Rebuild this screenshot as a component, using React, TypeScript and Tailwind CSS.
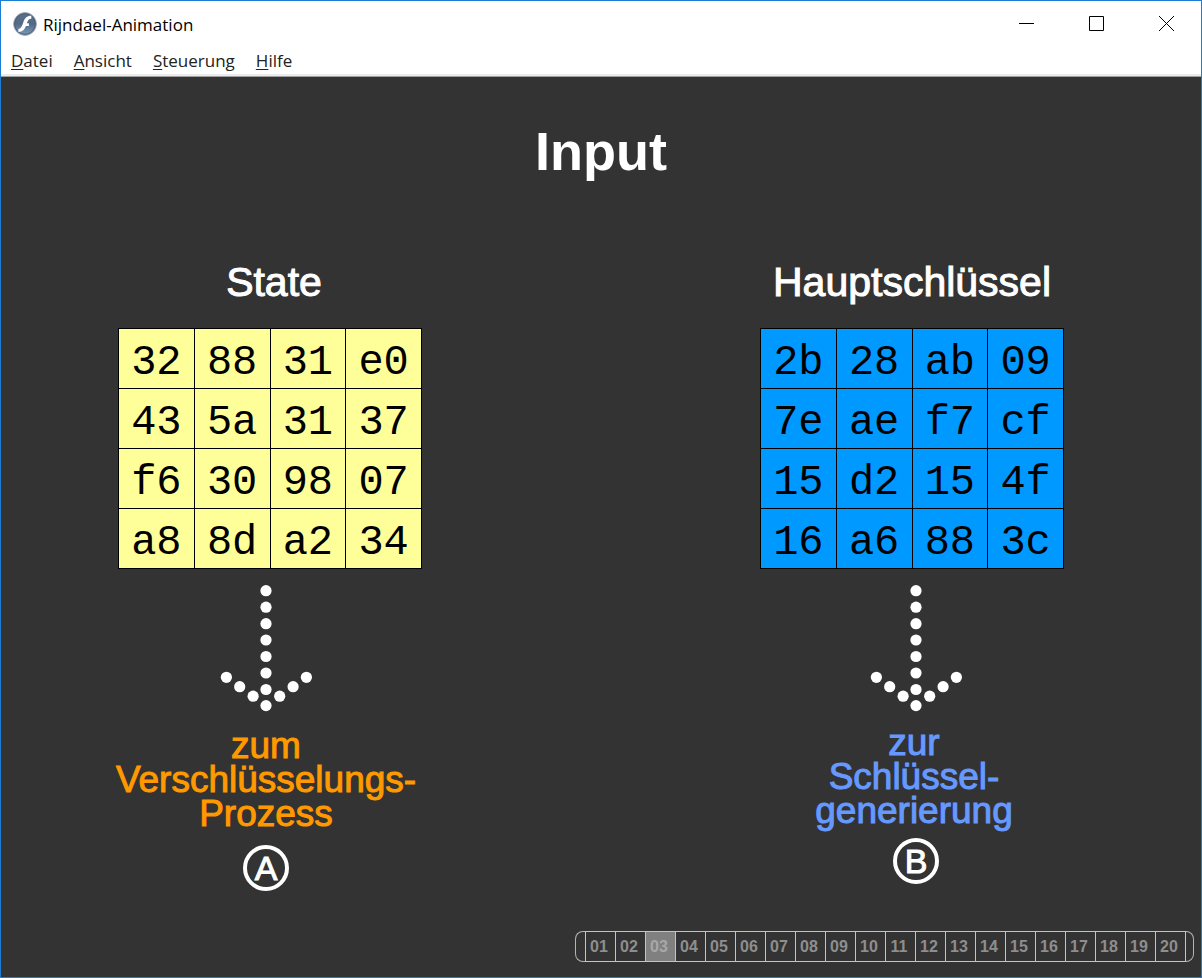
const STATE = [
  ['32', '88', '31', 'e0'],
  ['43', '5a', '31', '37'],
  ['f6', '30', '98', '07'],
  ['a8', '8d', 'a2', '34'],
];

const KEY = [
  ['2b', '28', 'ab', '09'],
  ['7e', 'ae', 'f7', 'cf'],
  ['15', 'd2', '15', '4f'],
  ['16', 'a6', '88', '3c'],
];

const MENU = ['Datei', 'Ansicht', 'Steuerung', 'Hilfe'];
const PAGES = Array.from({ length: 20 }, (_, i) => String(i + 1).padStart(2, '0'));
const CURRENT = '03';

function FlashIcon() {
  return (
    <svg className="size-6 shrink-0" viewBox="0 0 24 24" aria-hidden="true">
      <defs>
        <linearGradient id="disc" x1="0" y1="0" x2="0" y2="1">
          <stop offset="0" stopColor="#5b7089" />
          <stop offset="0.5" stopColor="#526a86" />
          <stop offset="1" stopColor="#7f9dbd" />
        </linearGradient>
      </defs>
      <circle cx="12" cy="12" r="11.4" fill="url(#disc)" stroke="#a3adb9" strokeWidth="1" />
      <circle cx="12" cy="12" r="10.3" fill="none" stroke="#4d6078" strokeWidth="1" />
      <path
        d="M18.300 3.800c-4.600 0-6.700 2.600-7.900 6.300-1.300 4-2.200 6.600-5 6.900v2.900c4.500-.2 6.300-2.800 7.500-6h3v-2.700h-2.100c1-2.700 1.800-4.400 4.500-4.500z"
        fill="#fff"
      />
    </svg>
  );
}

function DottedArrow() {
  const shaft = [6.7, 23.2, 39.7, 56, 72.5, 89, 105.5, 121.6];
  const arms = [
    [6.4, 93.3],
    [19.7, 102.7],
    [33.1, 112.2],
    [59.7, 112.2],
    [73.1, 102.7],
    [86.4, 93.3],
  ];
  return (
    <svg width="92" height="128" viewBox="0 0 92 128" fill="#fff" aria-hidden="true">
      {shaft.map((y) => (
        <circle key={y} cx="46" cy={y} r="5.6" />
      ))}
      {arms.map(([x, y]) => (
        <circle key={x} cx={x} cy={y} r="5.6" />
      ))}
    </svg>
  );
}

function Matrix({ rows, tone, label }: { rows: string[][]; tone: string; label: string }) {
  return (
    <table
      aria-label={label}
      className={`w-[304px] table-fixed border-collapse border border-black font-['Liberation_Mono',monospace] text-[42px] leading-[48px] text-black ${tone}`}
    >
      <tbody>
        {rows.map((row, r) => (
          <tr key={r} className="h-[60px]">
            {row.map((value, c) => (
              <td key={c} className="border border-black p-0 pt-2 text-center">
                {value}
              </td>
            ))}
          </tr>
        ))}
      </tbody>
    </table>
  );
}

function Badge({ letter }: { letter: string }) {
  return (
    <span className="flex size-[46px] items-center justify-center rounded-full border-4 border-white text-[34px] leading-none text-white [-webkit-text-stroke:1px]">
      {letter}
    </span>
  );
}

export default function App() {
  return (
    <div className="flex min-h-screen flex-col border border-[#1a7fd4] bg-[#333333] font-['Liberation_Sans',Arial,sans-serif]">
      <header className="border-b border-[#a0a0a0] bg-white font-['Open_Sans',sans-serif] text-black">
        <div className="flex h-[46px] items-center gap-[6px] pl-3">
          <FlashIcon />
          <h1 className="flex-1 pt-px text-[17px] leading-6">Rijndael-Animation</h1>
          <div className="flex self-start">
            <button type="button" aria-label="Minimieren" className="flex h-11 w-[70px] items-center justify-center">
              <svg width="15" height="15" viewBox="0 0 15 15" stroke="#000" fill="none">
                <path d="M0 7.5h15" />
              </svg>
            </button>
            <button type="button" aria-label="Maximieren" className="flex h-11 w-[70px] items-center justify-center">
              <svg width="15" height="15" viewBox="0 0 15 15" stroke="#000" fill="none">
                <path d="M.5.5h14v14H.5z" />
              </svg>
            </button>
            <button type="button" aria-label="Schließen" className="flex h-11 w-[70px] items-center justify-center">
              <svg width="15" height="15" viewBox="0 0 15 15" stroke="#000" fill="none">
                <path d="M0 0l15 15M15 0L0 15" />
              </svg>
            </button>
          </div>
        </div>
        <nav className="flex h-[29px] gap-[21px] border-b-2 border-[#ececec] pl-[10px] text-[17px] leading-[28px] text-[#222]">
          {MENU.map((item) => (
            <button key={item} type="button">
              <span className="underline underline-offset-2">{item[0]}</span>
              {item.slice(1)}
            </button>
          ))}
        </nav>
      </header>

      <main className="flex flex-1 flex-col">
        <h2 className="pt-[44px] text-center text-[54px] leading-[60px] font-bold text-white">Input</h2>

        <div className="flex justify-between pt-[77px] pr-[137px] pl-[117px]">
          <section className="flex w-[304px] flex-col items-center">
            <h3 className="pl-2 text-[41px] leading-[48px] text-white [-webkit-text-stroke:1px]">State</h3>
            <div className="pt-[22px]">
              <Matrix rows={STATE} tone="bg-[#ffff99]" label="State" />
            </div>
            <div className="flex flex-col items-center self-stretch pt-[15px] pr-2">
              <DottedArrow />
              <p className="pt-[17px] text-center text-[37px] leading-[34px] whitespace-nowrap text-[#ff9900] [-webkit-text-stroke:1px]">
                zum
                <br />
                Verschlüsselungs-
                <br />
                Prozess
              </p>
              <div className="pt-[14px]">
                <Badge letter="A" />
              </div>
            </div>
          </section>

          <section className="flex w-[304px] flex-col items-center">
            <h3 className="text-[41px] leading-[48px] text-white [-webkit-text-stroke:1px]">Hauptschlüssel</h3>
            <div className="pt-[22px]">
              <Matrix rows={KEY} tone="bg-[#0099ff]" label="Hauptschlüssel" />
            </div>
            <div className="flex flex-col items-center self-stretch pt-[15px] pl-2">
              <DottedArrow />
              <p className="pt-[14px] pr-1 text-center text-[37px] leading-[34px] whitespace-nowrap text-[#6699ff] [-webkit-text-stroke:1px]">
                zur
                <br />
                Schlüssel-
                <br />
                generierung
              </p>
              <div className="pt-[10px]">
                <Badge letter="B" />
              </div>
            </div>
          </section>
        </div>

        <nav
          aria-label="Seiten"
          className="mt-auto flex justify-end pr-[7px] pb-[15px] text-[16px] font-bold text-[#8e8e8e]"
        >
          <button
            type="button"
            aria-label="Zurück"
            className="h-[31px] w-[10px] rounded-l-lg border border-r-0 border-[#b4b4b4]"
          />
          <div className="flex border-r border-[#c4c4c4]">
            {PAGES.map((page) => (
              <button
                key={page}
                type="button"
                aria-current={page === CURRENT ? 'page' : undefined}
                className="h-[31px] w-[30px] border-y border-l border-[#c4c4c4] pr-[3px] aria-[current=page]:bg-[#808080] aria-[current=page]:text-[#a8a8a8]"
              >
                {page}
              </button>
            ))}
          </div>
          <button
            type="button"
            aria-label="Weiter"
            className="h-[31px] w-[8px] rounded-r-lg border border-l-0 border-[#b4b4b4]"
          />
        </nav>
      </main>
    </div>
  );
}
